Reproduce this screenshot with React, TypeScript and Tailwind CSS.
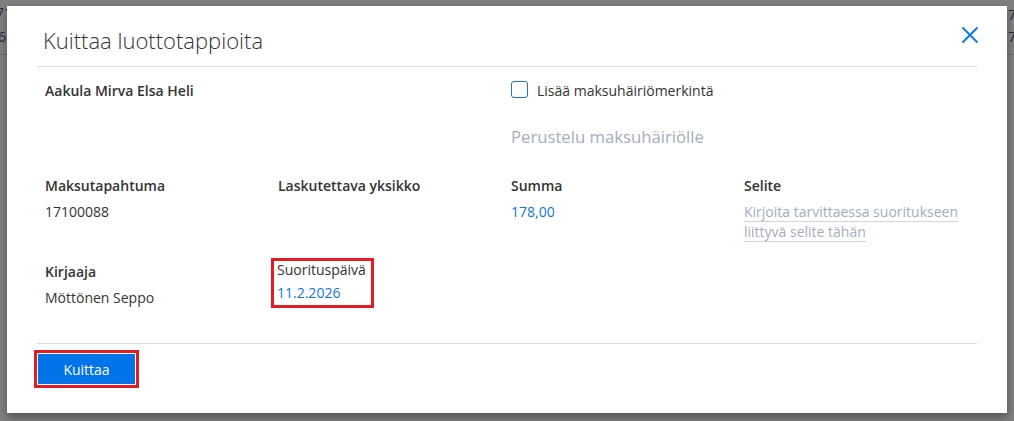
import { X } from 'lucide-react';

const font = { fontFamily: '"Open Sans", "Noto Sans", sans-serif' };

function Field({ label, value, blue = false }: { label: string; value?: string; blue?: boolean }) {
  return (
    <div className="flex flex-col">
      <div className="text-[14px] font-semibold leading-[20px] text-[#333]">{label}</div>
      {value ? (
        <div className={`mt-[6px] text-[14px] leading-[20px] ${blue ? 'text-[#0a78e6]' : 'text-[#333]'}`}>{value}</div>
      ) : null}
    </div>
  );
}

export default function App() {
  return (
    <div className="relative h-[421px] w-[1014px] overflow-hidden bg-[#7f7f7f]" style={font}>
      {/* page behind the overlay */}
      <div className="absolute left-0 top-0 h-full w-full text-[14px] text-[#1d2a3a]">
        <span className="absolute left-[-4px] top-[2px]">71</span>
        <span className="absolute left-[-2px] top-[26px]">6</span>
        <span className="absolute left-[1008px] top-[4px]">7</span>
        <span className="absolute left-[1008px] top-[26px]">7</span>
        <div className="absolute left-0 top-[54px] h-px w-full bg-[#6e6e6e]" />
      </div>

      <div className="relative pl-[7px] pt-[6px]">
        <div className="flex h-[407px] w-[1000px] flex-col bg-white px-[30px] shadow-[0_4px_8px_rgba(0,0,0,0.35)]">
          {/* header */}
          <div className="flex h-[61px] items-start justify-between border-b border-[#d5dde8] pl-[6px]">
            <h2 className="pt-[23px] text-[22px] font-light leading-none text-[#333]">Kuittaa luottotappioita</h2>
            <X className="-mr-[7px] mt-[15px] h-[28px] w-[28px] text-[#0a78e6]" strokeWidth={1.6} />
          </div>

          {/* body */}
          <div className="grid h-[276px] grid-cols-4 content-start pl-[8px] pt-[14px]">
            <div className="col-span-2 text-[14px] font-semibold leading-[20px] text-[#333]">Aakula Mirva Elsa Heli</div>
            <div className="col-span-2 flex flex-col">
              <label className="flex items-center gap-[9px] text-[14px] leading-[20px] text-[#333]">
                <span className="-mt-[3px] h-[17px] w-[17px] rounded-[3px] border border-[#1f74d4] bg-white" />
                <span>Lisää maksuhäiriömerkintä</span>
              </label>
              <div className="mt-[24px] text-[16.7px] leading-[24px] text-[#a3adbd]">Perustelu maksuhäiriölle</div>
            </div>

            <div className="col-span-4 mt-[27px] grid grid-cols-4">
              <Field label="Maksutapahtuma" value="17100088" />
              <Field label="Laskutettava yksikko" />
              <Field label="Summa" value="178,00" blue />
              <div className="flex flex-col">
                <div className="text-[14px] font-semibold leading-[20px] text-[#333]">Selite</div>
                <div className="mt-[6px] w-[220px] text-[14px] leading-[20px] text-[#a3adbd] underline decoration-[#ccd6e2] underline-offset-[4px]">
                  Kirjoita tarvittaessa suoritukseen liittyvä selite tähän
                </div>
              </div>
            </div>

            <div className="col-span-4 mt-[20px] grid grid-cols-4">
              <Field label="Kirjaaja" value="Möttönen Seppo" />
              <div className="flex">
                <div className="-ml-[7px] -mt-[4px] w-[103px] border-[3px] border-[#e31b23] px-[3px] pb-[2px]">
                  <div className="text-[14px] leading-[18px] text-[#333]">Suorituspäivä</div>
                  <div className="mt-[5px] text-[14px] leading-[18px] text-[#0a78e6]">11.2.2026</div>
                </div>
              </div>
            </div>
          </div>

          {/* footer */}
          <div className="border-t border-[#d5dde8] pt-[6px]">
            <div className="-ml-[3px] inline-flex border-[3px] border-[#e31b23] bg-white p-[1px]">
              <button className="h-[30px] w-[97px] bg-[#0074e8] text-[14px] text-white">Kuittaa</button>
            </div>
          </div>
        </div>
      </div>
    </div>
  );
}
